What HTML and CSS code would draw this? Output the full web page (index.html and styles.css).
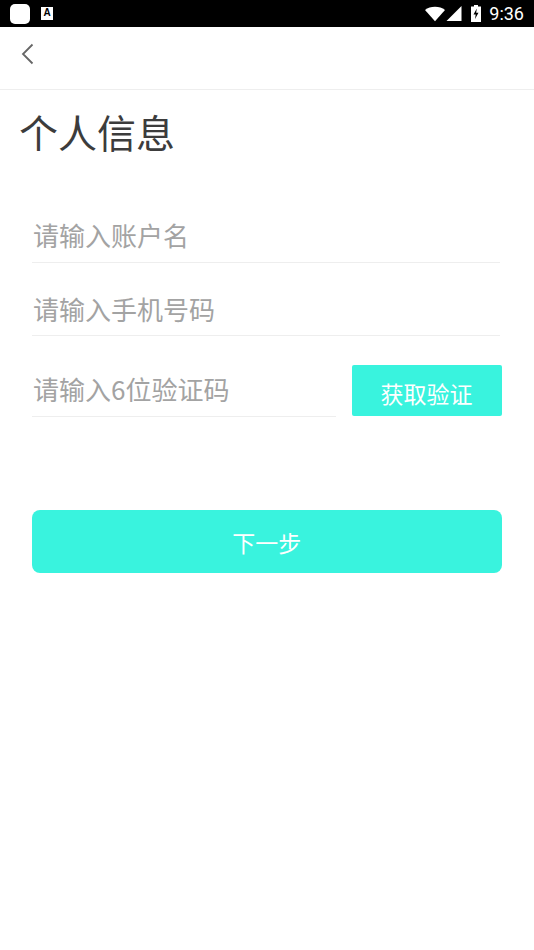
FILE: index.html
```html
<!DOCTYPE html>
<html lang="zh-CN">
<head>
  <meta charset="UTF-8">
  <meta name="viewport" content="width=device-width, initial-scale=1.0">
  <title>个人信息</title>
  <link rel="stylesheet" href="styles.css">
</head>
<body>
  <!-- Status bar -->
  <div class="status-bar">
    <div class="status-left">
      <span class="app-dot"></span>
      <span class="app-badge">A</span>
    </div>
    <div class="status-right">
      <svg class="icon-wifi" width="20" height="16" viewBox="0 0 22 16"><path d="M0 3.500C3 1.200 6.800 0 11 0s8 1.200 11 3.500L11 16z" fill="#fff"/></svg>
      <svg class="icon-signal" width="16" height="15" viewBox="0 0 15 15"><path d="M15 0v15H0z" fill="#fff"/></svg>
      <svg class="icon-battery" width="10" height="17" viewBox="0 0 10 17"><path d="M3 0h4v1.500h3V17H0V1.500h3z" fill="#fff"/><path d="M5.800 3.500 2.500 9.500h2.200L4 14l3.500-6.200H5.200z" fill="#000"/></svg>
      <span class="clock">9:36</span>
    </div>
  </div>

  <!-- Top bar -->
  <div class="top-bar">
    <svg class="back" width="14" height="22" viewBox="0 0 14 22"><path d="M12.500 1.500 3 11 12.500 20.500" fill="none" stroke="#666" stroke-width="1.800"/></svg>
  </div>

  <h1 class="title">个人信息</h1>

  <form class="form">
    <div class="field field-name">请输入账户名</div>
    <div class="field field-phone">请输入手机号码</div>
    <div class="code-row">
      <div class="field field-code">请输入6位验证码</div>
      <div class="code-btn">获取验证</div>
    </div>
    <div class="next-btn">下一步</div>
  </form>
</body>
</html>
```

FILE: styles.css
```css
body {
  margin: 0;
  padding: 0;
  background-color: #fff;
  font-family: "Noto Sans CJK SC", "Noto Sans", sans-serif;
}

.status-bar {
  display: flex;
  justify-content: space-between;
  align-items: center;
  height: 27px;
  background-color: #000;
  color: #fff;
}

.status-left {
  display: flex;
  align-items: center;
  gap: 11px;
  padding-left: 10px;
}

.app-dot {
  width: 20px;
  height: 20px;
  background-color: #fff;
  border-radius: 5px;
}

.app-badge {
  width: 12px;
  height: 13px;
  background-color: #fff;
  color: #000;
  font-family: "Liberation Sans", sans-serif;
  font-size: 10px;
  font-weight: bold;
  line-height: 12px;
  text-align: center;
}

.status-right {
  display: flex;
  align-items: center;
  padding-right: 9px;
}

.icon-wifi {
  margin-right: 1px;
}

.icon-signal {
  margin-right: 9px;
}

.icon-battery {
  margin-right: 8px;
}

.clock {
  font-family: Roboto, sans-serif;
  font-size: 18px;
  margin-right: 1px;
}

.top-bar {
  display: flex;
  align-items: center;
  height: 54px;
  padding: 0 0 8px 20px;
  border-bottom: 1px solid #eee;
}

.title {
  margin: 12px 0 0 19px;
  font-size: 39px;
  font-weight: 400;
  line-height: 58px;
  color: #3c3c3c;
}

.form {
  padding: 0 32.5px 0 32px;
}

.field {
  box-sizing: border-box;
  padding-left: 1px;
  border-bottom: 1px solid #eee;
  font-size: 26px;
  font-weight: 400;
  color: #a3a3a3;
}

.field-name {
  margin: 44px 1.500px 0 0;
  height: 59px;
  padding-top: 3px;
  line-height: 55px;
}

.field-phone {
  margin: 14px 1.500px 0 0;
  height: 59px;
  padding-top: 4px;
  line-height: 55px;
}

.code-row {
  display: flex;
  justify-content: space-between;
  margin-top: 29px;
}

.field-code {
  width: 304px;
  height: 52px;
  line-height: 47px;
}

.code-btn {
  width: 150px;
  height: 51px;
  background-color: #39f3de;
  border-radius: 2px;
  color: #fff;
  font-size: 23px;
  font-weight: 400;
  line-height: 57px;
  text-align: center;
}

.next-btn {
  height: 63px;
  margin-top: 93px;
  background-color: #39f3de;
  border-radius: 8px;
  color: #fff;
  font-size: 23px;
  font-weight: 400;
  line-height: 65px;
  text-align: center;
}
```
